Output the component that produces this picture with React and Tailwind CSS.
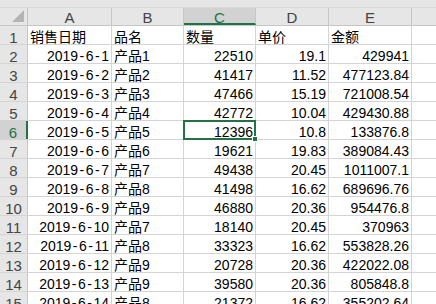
const cols = [
  { key: 'A', w: 'w-[84px]' },
  { key: 'B', w: 'w-[72px]' },
  { key: 'C', w: 'w-[72px]' },
  { key: 'D', w: 'w-[73px]' },
  { key: 'E', w: 'w-[83px]' },
];

const rows = [
  ['销售日期', '品名', '数量', '单价', '金额'],
  ['2019-6-1', '产品1', '22510', '19.1', '429941'],
  ['2019-6-2', '产品2', '41417', '11.52', '477123.84'],
  ['2019-6-3', '产品3', '47466', '15.19', '721008.54'],
  ['2019-6-4', '产品4', '42772', '10.04', '429430.88'],
  ['2019-6-5', '产品5', '12396', '10.8', '133876.8'],
  ['2019-6-6', '产品6', '19621', '19.83', '389084.43'],
  ['2019-6-7', '产品7', '49438', '20.45', '1011007.1'],
  ['2019-6-8', '产品8', '41498', '16.62', '689696.76'],
  ['2019-6-9', '产品9', '46880', '20.36', '954476.8'],
  ['2019-6-10', '产品7', '18140', '20.45', '370963'],
  ['2019-6-11', '产品8', '33323', '16.62', '553828.26'],
  ['2019-6-12', '产品9', '20728', '20.36', '422022.08'],
  ['2019-6-13', '产品9', '39580', '20.36', '805848.8'],
  ['2019-6-14', '产品8', '21372', '16.62', '355202.64'],
];

// dates in the sheet font have wide hyphens
function DateText({ value }) {
  const parts = value.split('-');
  return (
    <span>
      {parts.map((p, i) => (
        <span key={i}>
          {i > 0 && <span className="px-[1.5px]">-</span>}
          {p}
        </span>
      ))}
    </span>
  );
}

function Cell({ col, row, value, ci }) {
  const header = row === 1;
  const leftText = header || ci === 1;
  const selected = row === 6 && col.key === 'C';
  return (
    <div
      className={`relative ${col.w} h-full shrink-0 border-r border-[#d4d4d4] px-[2px] whitespace-nowrap overflow-visible ${
        leftText ? 'text-left' : 'text-right'
      }`}
    >
      {ci === 0 && !header ? <DateText value={value} /> : value}
      {selected && (
        <div className="absolute -left-[1px] -top-[1px] -right-[1px] -bottom-[1px] border-2 border-[#217346] z-10">
          <div className="absolute -right-[4px] -bottom-[4px] w-[6px] h-[6px] bg-[#217346] border border-white" />
        </div>
      )}
    </div>
  );
}

export default function App() {
  return (
    <div
      className="w-[436px] h-[304px] overflow-hidden bg-white text-[14px] text-black"
      style={{ fontFamily: '"Liberation Sans", "Noto Sans CJK SC", sans-serif' }}
    >
      <div className="h-[8px] bg-[#e6e6e6] border-b border-[#d9d9d9]" />

      {/* column headers */}
      <div className="flex h-[18px] bg-[#e6e6e6] border-b border-[#c6c6c6] leading-[20px] text-[15px] text-[#444]">
        <div className="relative w-[28px] shrink-0 border-r border-[#c6c6c6]">
          <div className="absolute right-[3px] bottom-[3px] w-0 h-0 border-l-[12px] border-l-transparent border-b-[12px] border-b-[#b4b4b4]" />
        </div>
        {cols.map((c) =>
          c.key === 'C' ? (
            <div
              key={c.key}
              className={`${c.w} shrink-0 border-r border-[#c6c6c6] bg-[#d2d2d2] text-center text-[#217346] border-b-2 border-b-[#217346]`}
            >
              {c.key}
            </div>
          ) : (
            <div key={c.key} className={`${c.w} shrink-0 border-r border-[#c6c6c6] text-center`}>
              {c.key}
            </div>
          )
        )}
        <div className="flex-1" />
      </div>

      {rows.map((r, ri) => {
        const n = ri + 1;
        return (
          <div key={n} className="flex h-[19px] border-b border-[#d4d4d4] leading-[23px]">
            <div
              className={`w-[28px] shrink-0 text-center text-[15px] ${
                n === 6
                  ? 'bg-[#d2d2d2] text-[#217346] border-r-2 border-[#217346]'
                  : 'bg-[#e6e6e6] text-[#444] border-r border-[#c6c6c6]'
              }`}
            >
              {n}
            </div>
            {cols.map((c, ci) => (
              <Cell key={c.key} col={c} row={n} value={r[ci]} ci={ci} />
            ))}
            <div className="flex-1" />
          </div>
        );
      })}
    </div>
  );
}
